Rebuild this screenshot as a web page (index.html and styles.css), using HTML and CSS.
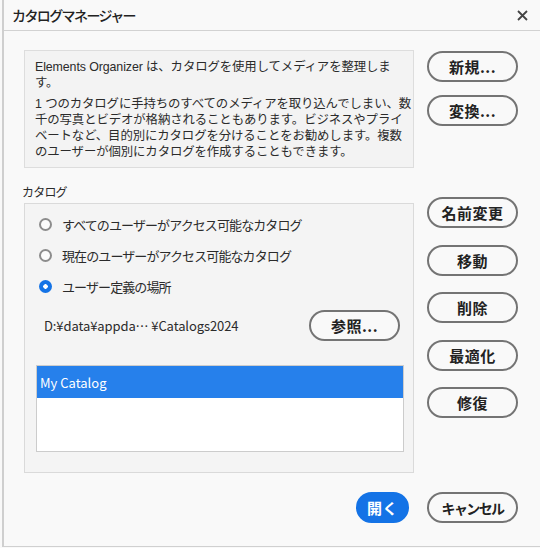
FILE: index.html
```html
<!DOCTYPE html>
<html lang="ja">
<head>
<meta charset="utf-8">
<title>カタログマネージャー</title>
<link rel="stylesheet" href="styles.css">
</head>
<body>
<div class="window">
  <div class="titlebar">
    <span class="title">カタログマネージャー</span>
    <svg class="close" width="11" height="11" viewBox="0 0 11 11"><path d="M1 1 L10 10 M10 1 L1 10" stroke="#444" stroke-width="1.8" fill="none"/></svg>
  </div>
  <div class="content">
    <div class="top-row">
      <div class="info">
        <p>Elements Organizer は、カタログを使用してメディアを整理しま<br>す。</p>
        <p>1 つのカタログに手持ちのすべてのメディアを取り込んでしまい、数<br>千の写真とビデオが格納されることもあります。ビジネスやプライ<br>ベートなど、目的別にカタログを分けることをお勧めします。複数<br>のユーザーが個別にカタログを作成することもできます。</p>
      </div>
      <div class="side top-side">
        <button class="btn">新規...</button>
        <button class="btn">変換...</button>
      </div>
    </div>
    <div class="catalog-row">
      <div class="catalog-col">
        <div class="label">カタログ</div>
        <div class="group">
          <label class="radio-row"><span class="radio"></span>すべてのユーザーがアクセス可能なカタログ</label>
          <label class="radio-row"><span class="radio"></span>現在のユーザーがアクセス可能なカタログ</label>
          <label class="radio-row"><span class="radio checked"></span>ユーザー定義の場所</label>
          <div class="path-row">
            <span class="path">D:¥data¥appda… ¥Catalogs2024</span>
            <button class="btn">参照...</button>
          </div>
          <div class="list">
            <div class="list-item selected">My Catalog</div>
          </div>
        </div>
      </div>
      <div class="side cat-side">
        <button class="btn">名前変更</button>
        <button class="btn">移動</button>
        <button class="btn">削除</button>
        <button class="btn">最適化</button>
        <button class="btn">修復</button>
      </div>
    </div>
    <div class="footer">
      <button class="btn primary">開く</button>
      <button class="btn kana">キャンセル</button>
    </div>
  </div>
</div>
</body>
</html>
```

FILE: styles.css
```css
html, body {
  margin: 0;
  padding: 0;
  background: #f9f9f9;
}
body {
  font-family: "Noto Sans CJK JP", "Noto Sans", sans-serif;
  color: #2b2b2b;
}
.window {
  margin-left: 2px;
  width: 538px;
  height: 547px;
  box-sizing: border-box;
  border-left: 2px solid #cfcfcf;
  border-bottom: 1px solid #d0d0d0;
  background: #f9f9f9;
}
.titlebar {
  height: 30px;
  border-bottom: 1px solid #d2d2d2;
  display: flex;
  align-items: center;
  justify-content: space-between;
  padding: 0 12px 0 8px;
}
.title {
  font-size: 14px;
  font-weight: 500;
  letter-spacing: -1.6px;
  color: #222;
}
.close { display: block; }
.content {
  padding: 19px 22px 0 20px;
}
.top-row {
  display: flex;
  gap: 13px;
}
.info {
  width: 390px;
  height: 118px;
  box-sizing: border-box;
  background: #f3f3f3;
  border: 1px solid #dddddd;
  padding: 8px 8px 0 10px;
  font-family: "Liberation Sans", "Noto Sans CJK JP", sans-serif;
  font-size: 12.4px;
  line-height: 16px;
  white-space: nowrap;
  letter-spacing: -0.1px;
}
.info p { margin: 0; }
.info p + p { margin-top: 5px; }
.side {
  display: flex;
  flex-direction: column;
  width: 91px;
}
.top-side {
  padding-top: 1px;
  gap: 13px;
}
.btn {
  font-family: "Noto Sans CJK JP", "Noto Sans", sans-serif;
  height: 31px;
  width: 91px;
  box-sizing: border-box;
  border: 2px solid #747474;
  border-radius: 16px;
  background: #f9f9f9;
  color: #222;
  font-size: 15px;
  font-weight: 700;
  letter-spacing: 0.5px;
  padding: 0;
  line-height: 1;
}
.btn.kana {
  font-size: 14px;
  letter-spacing: -1.6px;
}
.catalog-row {
  display: flex;
  gap: 13px;
  margin-top: 16px;
}
.catalog-col {
  width: 390px;
}
.label {
  font-size: 12px;
  line-height: 16px;
  height: 16px;
  margin-bottom: 3px;
  margin-left: -2px;
  letter-spacing: -0.8px;
}
.group {
  height: 270px;
  box-sizing: border-box;
  background: #f4f4f4;
  border: 1px solid #dadada;
  padding: 5px 9px 0 11px;
}
.radio-row {
  display: flex;
  align-items: center;
  height: 31px;
  padding-left: 3px;
  gap: 10px;
  font-size: 13px;
  letter-spacing: -0.9px;
  color: #2b2b2b;
}
.radio {
  width: 13px;
  height: 13px;
  box-sizing: border-box;
  border-radius: 50%;
  border: 2px solid #8c8c8c;
  background: #fbfbfb;
  flex: none;
}
.radio.checked {
  border: none;
  background: radial-gradient(circle, #ffffff 0 2px, #1473e6 2.5px);
}
.path-row {
  display: flex;
  align-items: center;
  justify-content: space-between;
  height: 31px;
  margin-top: 8px;
  padding-left: 8px;
  padding-right: 4px;
}
.path {
  font-size: 13px;
  letter-spacing: -0.1px;
}
.list {
  margin-top: 24px;
  height: 87px;
  box-sizing: border-box;
  border: 1px solid #cccccc;
  background: #ffffff;
}
.list-item {
  height: 32px;
  display: flex;
  align-items: center;
  padding-left: 3px;
  font-size: 13px;
}
.list-item.selected {
  background: #2680eb;
  color: #ffffff;
}
.cat-side {
  padding-top: 13px;
  gap: 16.5px;
}
.footer {
  display: flex;
  justify-content: flex-end;
  gap: 18px;
  margin-top: 19px;
}
.btn.primary {
  width: 53px;
  background: #1473e6;
  border-color: #1473e6;
  color: #ffffff;
}
```
